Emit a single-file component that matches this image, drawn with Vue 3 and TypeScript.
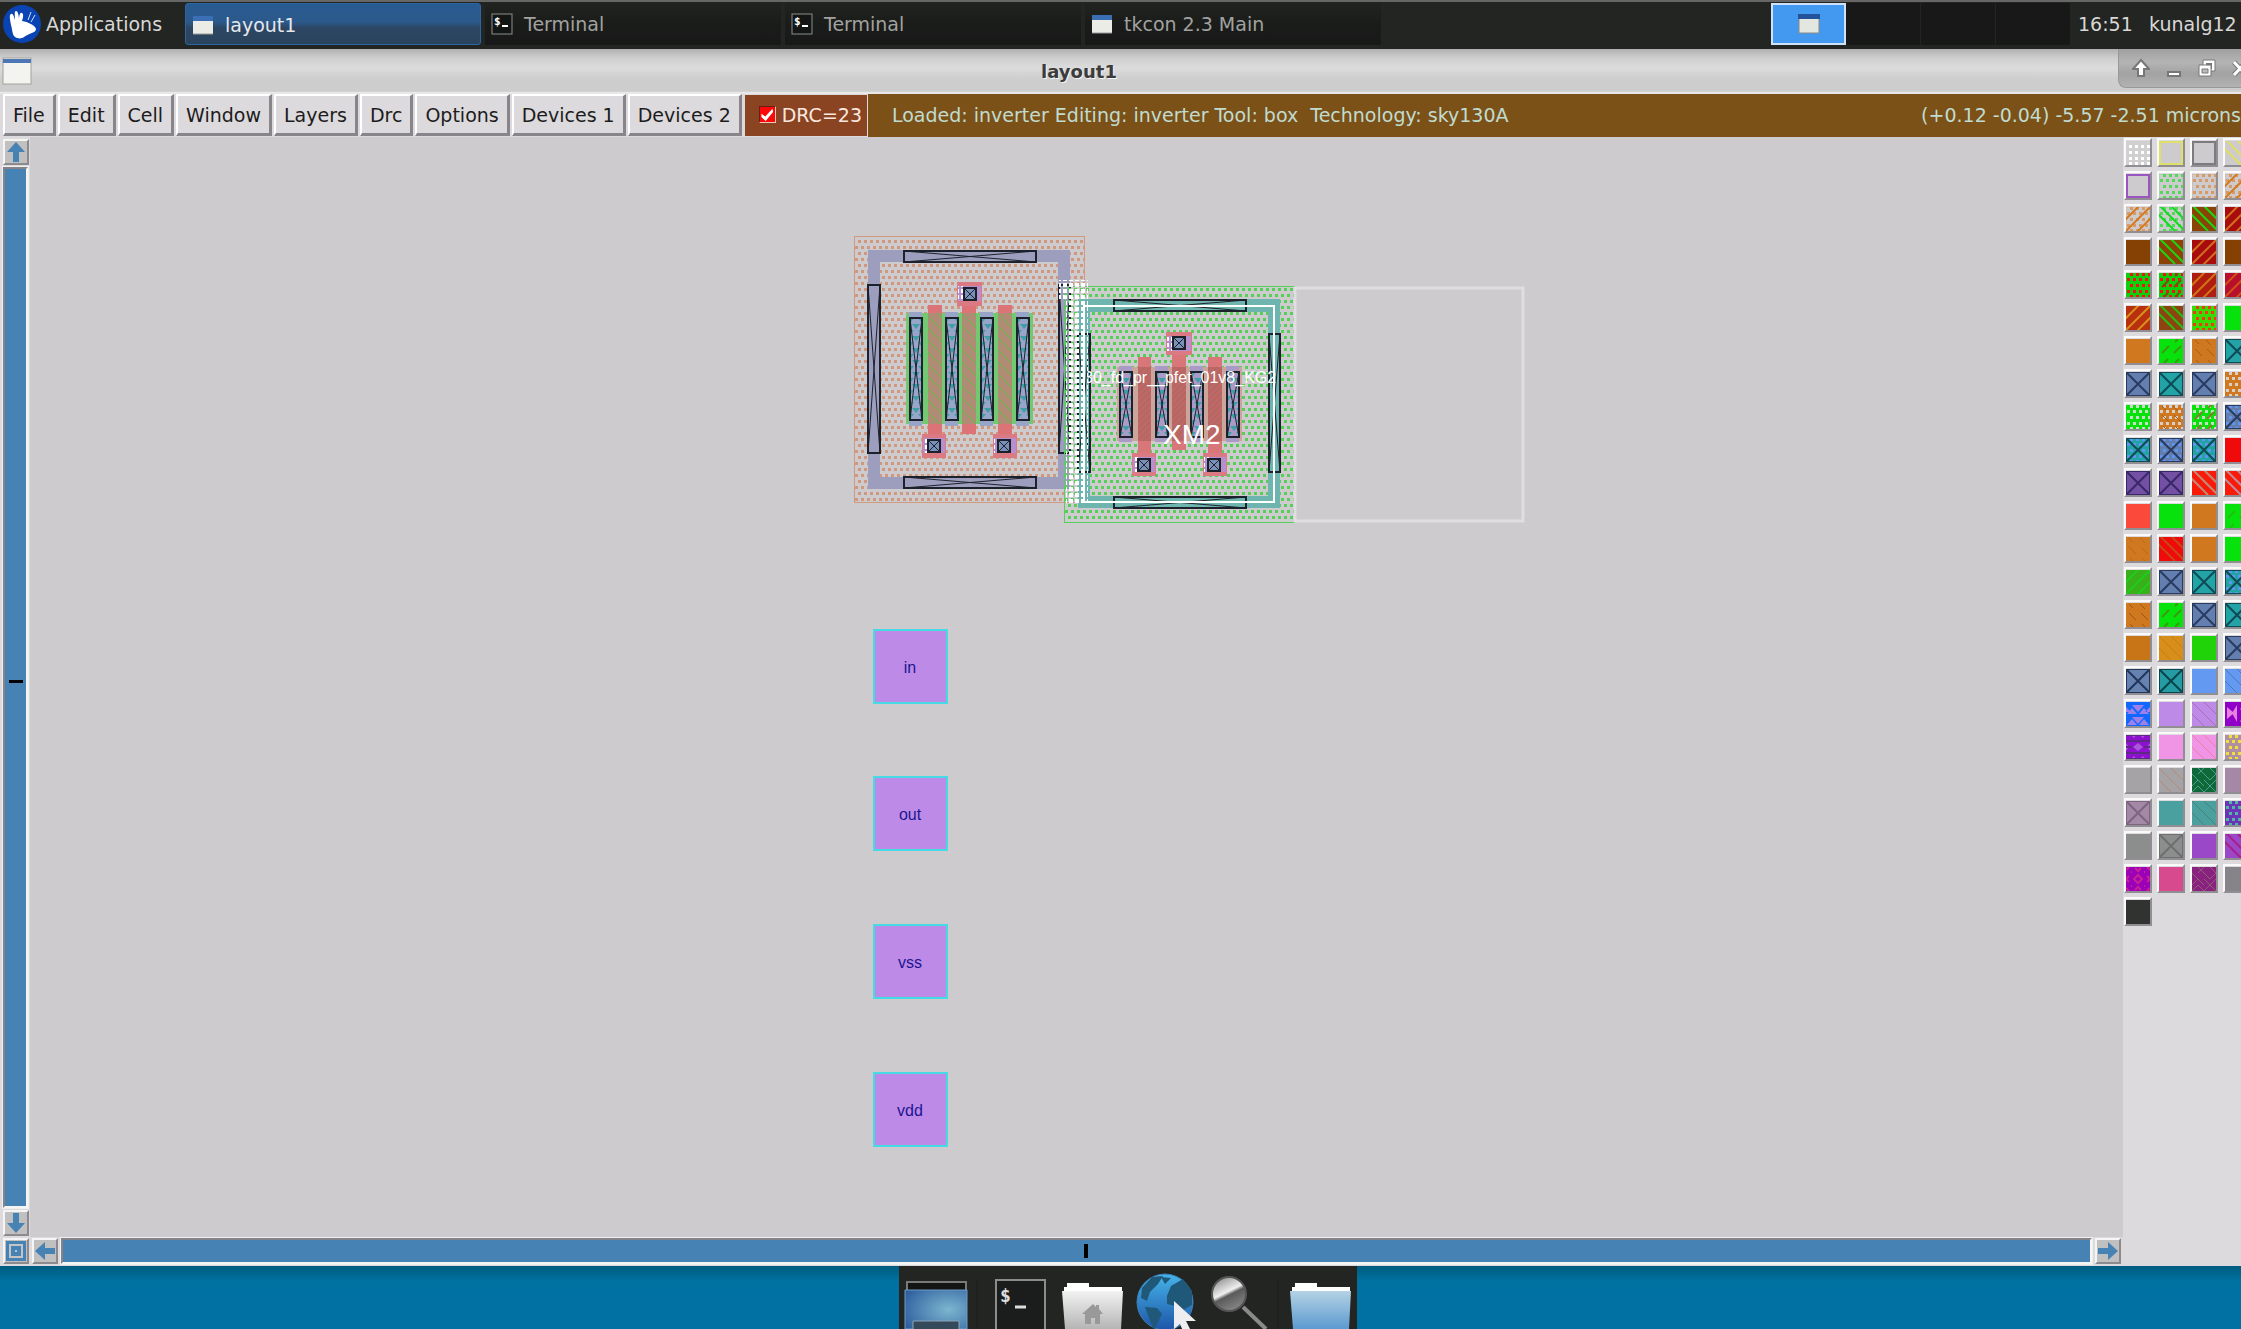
<script setup lang="ts">
type Layer = [kind: string, color: string]
interface Swatch { bg: string; layers: Layer[] }

const tasks = [
  { icon: 'window', title: 'layout1', active: true },
  { icon: 'term', title: 'Terminal', active: false },
  { icon: 'term', title: 'Terminal', active: false },
  { icon: 'window', title: 'tkcon 2.3 Main', active: false },
]
const menus = ['File', 'Edit', 'Cell', 'Window', 'Layers', 'Drc', 'Options', 'Devices 1', 'Devices 2']

const s = (bg: string, ...layers: Layer[]): Swatch => ({ bg, layers })
const INK = '#2a3b60'
const DEEP = '#0f4a56'
const GRAY = '#cdcbce'
const GREEN = '#08e20c'
const ORANGE = '#cf7820'
const BLUE = '#637fb0'
const TEAL = '#22a3a6'
const AZURE = '#5f95f0'
const blueX = () => s(BLUE, ['x', INK])
const tealX = () => s(TEAL, ['x', DEEP])
const tealDots = () => s(TEAL, ['dots', AZURE], ['x', DEEP])

const swatches: Swatch[] = [
  s('#d0d0d0', ['grid', '#ffffff']), s(GRAY, ['frame', '#dfe067']), s(GRAY, ['frame', '#7c7c7e']), s(GRAY, ['back', '#e0dd66']),
  s(GRAY, ['frame', '#9a55c0']), s(GRAY, ['thin', '#8fd893'], ['dots', '#55d85a']), s(GRAY, ['thin', '#d8b090'], ['dots', '#d59a66']), s(GRAY, ['thin', '#d8b090'], ['dots', '#d59a66'], ['slash', '#d47a20']),
  s(GRAY, ['thin', '#d8b090'], ['dots', '#d59a66'], ['slash', '#d47a20']), s(GRAY, ['thin', '#8fd893'], ['dots', '#55d85a'], ['back', '#10dc20']), s('#8b4205', ['back', '#1ad510']), s('#a80c0c', ['slash', '#d07020']),
  s('#854004'), s('#8b4205', ['back', '#1ad510']), s('#a80c0c', ['slash', '#d07020']), s('#854004'),
  s('#0dd00d', ['dots', '#f01414']), s('#0dd00d', ['dots', '#f01414'], ['dashSlash', '#7a5010']), s('#b01c10', ['slash', '#cf7518']), s('#b80f2c', ['slash', '#cf5018']),
  s('#b8300f', ['slash', '#d8901a']), s('#8e4410', ['back', '#22c010']), s('#35dd05', ['dots', '#f03a10']), s(GREEN),
  s(ORANGE), s(GREEN, ['dashSlash', '#3c9a10']), s(ORANGE, ['dashBack', '#a06018']), tealX(),
  blueX(), tealX(), blueX(), s(ORANGE, ['dots', '#d8cfc8']),
  s(GREEN, ['dots', '#c8dcc8']), s(ORANGE, ['dots', '#d8cfc8'], ['dashBack', '#a06018']), s(GREEN, ['dots', '#c8dcc8'], ['dashSlash', '#8a7a30']), s(BLUE, ['dots', AZURE], ['x', INK]),
  tealDots(), s(BLUE, ['dots', AZURE], ['x', INK]), tealDots(), s('#f00a0c'),
  s('#7350a3', ['x', '#382868']), s('#7350a3', ['x', '#382868']), s('#fa1a08', ['back', '#c08a78']), s('#fa1a08', ['back', '#c08a98']),
  s('#fb4a3c'), s(GREEN), s(ORANGE), s(GREEN, ['dashSlash', '#20c010']),
  s(ORANGE, ['dashBack', '#b8681c']), s('#f00a0c', ['back', '#c84814']), s(ORANGE), s(GREEN),
  s('#38b01c', ['slash', '#20cc18']), blueX(), tealX(), tealDots(),
  s(ORANGE, ['dashBack', '#9a5818']), s(GREEN, ['dashSlash', '#3c9a10']), blueX(), tealX(),
  s('#c87518'), s('#d88e18', ['thinBack', '#b8821c']), s('#20d208'), blueX(),
  s('#6582b0', ['x', '#22365a']), s('#259ba3', ['x', '#0a444c']), s('#6399f0'), s('#6399f0', ['thinBack', '#4a78b8']),
  s('#1068ff', ['tri', '#a080e8']), s('#bd8be7'), s('#bd8be7', ['thinBack', '#b06cae']), s('#9000c8', ['triSide', '#e880e0']),
  s('#9010d0', ['diamond', '#a858d8'], ['weave', '#5c2c84']), s('#f095e5'), s('#f095e5', ['thinBack', '#f47ca4']), s('#b090a0', ['dots', '#f0e038']),
  s('#a5a3a6'), s('#a5a3a6', ['thinBack', '#b58a70']), s('#0f6838', ['basket', '#45a090']), s('#a588a5'),
  s('#a588a5', ['x', '#7d6580']), s('#4a9f9f'), s('#4a9f9f', ['thinBack', '#508070']), s('#6a35b8', ['dots', '#50b8a0']),
  s('#8b8e8c'), s('#8b8e8c', ['x', '#6c706e']), s('#9b48c8'), s('#9b48c8', ['back', '#a8208c']),
  s('#9a00b8', ['rings', '#cc2094']), s('#d84a8e'), s('#8a2080', ['basket', '#8a6070']), s('#868488'),
  s('#30332f'),
]

function squares(rows: number[], even: number[], odd: number[]): string {
  return rows.map((y, i) => (i % 2 ? odd : even).map(x => `M${x} ${y}h3v3h-3z`).join('')).join('')
}

const fills: Record<string, string> = {
  grid: squares([4, 10, 16, 21], [3, 9, 15, 21], [3, 9, 15, 21]),
  dots: squares([0, 5, 11, 17, 22], [4, 10, 16, 22], [1, 7, 13, 19]),
  tri: 'M6 3h12l-6 7zM0 10h5l-5-5zM24 5v5h-5zM1 12h10l-5-6zM13 12h10l-5-6zM6 15h12l-6 7zM1 23h10l-5-6zM13 23h10l-5-6z',
  triSide: 'M2 5l7 6-7 6zM12 3v17l-5-9zM22 2v10l-7-5zM22 14v10l-7-5z',
  diamond: 'M12 8l5 4-5 4-5-4zM0 8l3 4-3 4zM24 8l-3 4 3 4zM5 0h5l-2 3zM14 0h5l-2 3zM5 24h5l-2-3zM14 24h5l-2-3z',
}
const strokes: Record<string, string> = {
  frame: 'M1 1H23V23H1z',
  thin: 'M0 0H24V24H0z',
  back: 'M-8 0l24 24M0-2l26 26M12-1l14 14',
  thinBack: 'M-8 4l22 22M-1-1l26 26M12 0l14 14',
  slash: 'M-2 14L14-2M-1 25L25-1M10 26L26 10',
  dashSlash: 'M3 14l7-7M16 3l3-3M5 24l4-4M15 14l7-7M16 24l4-4',
  dashBack: 'M3 1l4 4M3 10l7 7M15 10l7 7M14 1l5 5M4 21l3 3M16 21l3 3',
  x: 'M0 0L24 24M24 0L0 24M0 0H24V24H0z',
  weave: 'M0 6H24M0 12H6M18 12H24M0 18H24M0 0H24M0 24H24',
  basket: 'M0 6l6 6M6 0l6 6M12 0l-6 6M12 6l6 6M18 0l6 6M24 6l-6 6M0 18l6-6M6 12l6 6M0 24l6-6M12 12l6 6M12 24l6-6M18 18l6 6M24 12l-6 6M6 18l6 6',
  rings: 'M8 12l4-4 4 4-4 4zM0 3l3-3M21 0l3 3M0 21l3 3M24 21l-3 3M0 12l3-3M0 12l3 3M24 12l-3-3M24 12l-3 3M9 1l3 3 3-3M9 23l3-3 3 3M5 5h1M18 5h1M5 19h1M18 19h1',
}
const wide = new Set(['frame', 'back', 'slash', 'x', 'rings', 'weave', 'dashSlash'])

const labels = [
  { name: 'in', y: 629 },
  { name: 'out', y: 776 },
  { name: 'vss', y: 924 },
  { name: 'vdd', y: 1072 },
]

interface Box { x: number; y: number; w: number; h: number }
const b = (x: number, y: number, w: number, h: number): Box => ({ x, y, w, h })
const outline = (k: Box) => `M${k.x} ${k.y}h${k.w}v${k.h}h${-k.w}z`
const diagonals = (k: Box) => `M${k.x} ${k.y}l${k.w} ${k.h}M${k.x + k.w} ${k.y}l${-k.w} ${k.h}`

const left = {
  guards: [b(904, 251, 132, 11), b(904, 477, 132, 11), b(868, 285, 12, 168), b(1059, 285, 11, 168)],
  metal: [909, 945, 980, 1016].map(x => b(x, 312, 13, 114)),
  contact: [910, 946, 981, 1017].map(x => b(x, 318, 12, 102)),
  gates: [b(928, 305, 14, 129), b(962, 305, 14, 129), b(998, 305, 14, 129)],
  channel: [b(928, 313, 14, 111), b(962, 313, 14, 111), b(998, 313, 14, 111)],
  pads: [b(957, 282, 25, 24), b(922, 434, 24, 24), b(993, 434, 24, 24)],
  vias: [b(964, 288, 12, 12), b(928, 440, 12, 12), b(998, 440, 12, 12)],
}
const right = {
  guards: [b(1114, 300, 132, 11), b(1114, 497, 132, 11), b(1078, 334, 12, 138), b(1269, 334, 11, 138)],
  metal: [1119, 1155, 1190, 1226].map(x => b(x, 366, 13, 76)),
  contact: [1120, 1156, 1191, 1227].map(x => b(x, 372, 12, 65)),
  gates: [b(1138, 357, 13, 97), b(1172, 354, 14, 96), b(1208, 357, 14, 97)],
  channel: [b(1138, 367, 13, 74), b(1172, 367, 14, 74), b(1208, 367, 14, 74)],
  pads: [b(1166, 332, 26, 23), b(1132, 453, 24, 23), b(1203, 453, 24, 23)],
  vias: [b(1173, 337, 12, 12), b(1138, 459, 12, 12), b(1208, 459, 12, 12)],
}
</script>

<template>
  <div class="desktop">
    <nav class="taskbar">
      <button class="apps">
        <svg width="40" height="40" viewBox="0 0 40 40" aria-hidden="true">
          <circle cx="20" cy="20" r="19" fill="#0a44b4" />
          <path d="M9 21c-1-6-2-10 0-11s3 3 4 6c0-4-1-9 1-9s3 5 3 9c0-4 1-8 3-7s1 5 0 8c6 1 13 4 14 8 0 4-7 4-12 8-4 3-10 1-11-3-1-3-1-6-2-9z" fill="#fff" />
          <path d="M26 16l3-8M29 18l4-7" stroke="#cfe0ff" stroke-width="1" />
        </svg>
        <span>Applications</span>
      </button>
      <button v-for="(t, i) in tasks" :key="i" class="task" :class="{ active: t.active }">
        <svg v-if="t.icon === 'window'" width="22" height="22" viewBox="0 0 22 22" aria-hidden="true">
          <rect x="1" y="2" width="20" height="18" fill="#ecece6" />
          <rect x="1" y="2" width="20" height="5" fill="#3a6eb5" />
          <path d="M1 20h20" stroke="#999" />
        </svg>
        <svg v-else width="22" height="22" viewBox="0 0 22 22" aria-hidden="true">
          <rect x="1" y="1" width="20" height="20" fill="#131615" stroke="#8b8e8d" />
          <text x="3" y="12" class="prompt">$</text>
          <path d="M11 13h6" stroke="#fff" stroke-width="2" />
        </svg>
        <span>{{ t.title }}</span>
      </button>
      <div class="pager">
        <button class="desk current" aria-label="Workspace 1">
          <svg width="22" height="20" viewBox="0 0 22 20" aria-hidden="true">
            <rect x="1" y="1" width="20" height="18" fill="#e4e6e0" stroke="#8a8a86" />
            <rect x="0" y="0" width="22" height="5" fill="#22529a" />
          </svg>
        </button>
        <button v-for="n in 3" :key="n" class="desk" :aria-label="'Workspace ' + (n + 1)"></button>
      </div>
      <span class="clock">16:51</span>
      <span class="user">kunalg12</span>
    </nav>

    <main class="window">
      <header class="titlebar">
        <svg class="winicon" width="30" height="28" viewBox="0 0 30 28" aria-hidden="true">
          <rect x="1" y="1" width="28" height="26" fill="#f3f3f0" stroke="#a4a29c" />
          <rect x="1" y="2" width="28" height="4" fill="#4d76b6" />
        </svg>
        <h1>layout1</h1>
        <div class="controls">
          <button aria-label="Shade"><svg width="18" height="22" viewBox="0 0 18 22"><path d="M9 3l8 9h-5v7H6v-7H1z" fill="#fff" stroke="#777" stroke-width="2" /></svg></button>
          <button aria-label="Minimize"><svg width="18" height="22" viewBox="0 0 18 22"><path d="M3 15h12v4H3z" fill="#fff" stroke="#777" stroke-width="2" /></svg></button>
          <button aria-label="Restore"><svg width="18" height="22" viewBox="0 0 18 22"><path d="M5 3h12v11H5z" fill="#fff" stroke="#777" /><path d="M8 6h6v6H8z" fill="#777" /><path d="M1 8h12v11H1z" fill="#fff" stroke="#777" /><path d="M4 12h6v4H4z" fill="#bbb" stroke="#777" /></svg></button>
          <button aria-label="Close"><svg width="18" height="22" viewBox="0 0 18 22"><path d="M3 5l12 13M15 5L3 18" stroke="#777" stroke-width="5" /><path d="M3 5l12 13M15 5L3 18" stroke="#fff" stroke-width="3" /></svg></button>
        </div>
      </header>

      <div class="menubar">
        <button v-for="m in menus" :key="m" class="menu">{{ m }}</button>
        <label class="drc"><input type="checkbox" checked /><span>DRC=23</span></label>
        <div class="status">
          <span class="info">Loaded: inverter Editing: inverter Tool: box&nbsp; Technology: sky130A</span>
          <span class="coords">(+0.12 -0.04) -5.57 -2.51 microns</span>
        </div>
      </div>

      <div class="body">
        <div class="vscroll">
          <button class="arrow" aria-label="Scroll up"><svg width="20" height="20" viewBox="0 0 20 20"><path d="M10 0l9 10h-6v10H7V10H1z" fill="#4682b4" /></svg></button>
          <div class="track"><i></i></div>
          <button class="arrow" aria-label="Scroll down"><svg width="20" height="20" viewBox="0 0 20 20"><path d="M10 20l9-10h-6V0H7v10H1z" fill="#4682b4" /></svg></button>
        </div>

        <svg class="canvas" aria-label="Cell layout">
          <defs>
            <pattern id="pOrange" width="6" height="12" patternUnits="userSpaceOnUse"><path d="M0 0h3v3H0zM3 6h3v3H3z" fill="#d0987e" /></pattern>
            <pattern id="pGreen" width="6" height="12" patternUnits="userSpaceOnUse"><path d="M0 0h3v3H0zM3 6h3v3H3z" fill="#55cf57" /></pattern>
            <pattern id="pWhite" width="6" height="6" patternUnits="userSpaceOnUse"><path d="M1 1h4v4H1z" fill="#fff" /></pattern>
            <pattern id="pSlant" width="12" height="12" patternUnits="userSpaceOnUse"><path d="M-2-2l16 16M-2 10l4 4M10-2l4 4" stroke="#58c43c" stroke-width="1" /></pattern>
            <pattern id="pTri" width="12" height="12" patternUnits="userSpaceOnUse"><path d="M0 0h8l-4 5zM6 6h8l-4 5zM-6 6h8l-4 5z" fill="#3f9fa6" /></pattern>
            <pattern id="pSpeck" width="6" height="6" patternUnits="userSpaceOnUse"><path d="M0 6L6 0" stroke="#a0704e" /></pattern>
            <clipPath id="clipName"><rect x="1088" y="360" width="188" height="40" /></clipPath>
          </defs>
          <g transform="translate(-30 -137)">
            <rect x="854" y="236" width="230" height="266" fill="url(#pOrange)" class="rim" stroke="#d09a80" />
            <path d="M868 250h202v239H868zM880 262v215h178V262z" fill="#9d9dbd" fill-rule="evenodd" />
            <g v-for="(k, i) in left.guards" :key="'g' + i">
              <path :d="outline(k)" class="outline" />
              <path :d="diagonals(k)" class="diagonal" />
            </g>
            <rect x="906" y="313" width="127" height="111" fill="#72c971" />
            <rect v-for="(k, i) in left.metal" :key="'m' + i" :x="k.x" :y="k.y" :width="k.w" :height="k.h" fill="#98a4c8" />
            <g v-for="(k, i) in left.contact" :key="'c' + i">
              <rect :x="k.x" :y="k.y" :width="k.w" :height="k.h" fill="url(#pTri)" />
              <path :d="outline(k)" class="outline" />
              <path :d="diagonals(k)" class="diagonal" />
            </g>
            <rect v-for="(k, i) in left.gates" :key="'p' + i" :x="k.x" :y="k.y" :width="k.w" :height="k.h" fill="#dc7477" />
            <rect v-for="(k, i) in left.channel" :key="'n' + i" :x="k.x" :y="k.y" :width="k.w" :height="k.h" fill="#b08c76" />
            <rect v-for="(k, i) in left.channel" :key="'s' + i" :x="k.x" :y="k.y" :width="k.w" :height="k.h" fill="url(#pSlant)" />
            <template v-for="(k, i) in left.pads" :key="'d' + i">
              <rect :x="k.x" :y="k.y" :width="k.w" :height="k.h" fill="#dc7a84" />
              <rect :x="k.x + 1" :y="k.y + 4" :width="k.w - 2" :height="k.h - 9" fill="#b78fce" />
              <rect :x="k.x + 1" :y="k.y + 4" width="5" :height="k.h - 9" fill="url(#pWhite)" />
            </template>
            <g v-for="(k, i) in left.vias" :key="'v' + i">
              <rect :x="k.x" :y="k.y" :width="k.w" :height="k.h" fill="#7a90b8" />
              <path :d="outline(k)" class="outline" />
              <path :d="diagonals(k)" class="diagonal" />
            </g>

            <rect x="1064" y="286" width="230" height="236" fill="url(#pGreen)" class="rim" stroke="#55d058" />
            <path d="M1078 299h202v209h-202zM1090 312v184h178V312z" fill="#6db5ae" fill-rule="evenodd" />
            <g v-for="(k, i) in right.guards" :key="'g' + i">
              <path :d="outline(k)" class="outline" />
              <path :d="diagonals(k)" class="diagonal" />
            </g>
            <rect x="1117" y="367" width="125" height="74" fill="#cda49a" />
            <rect v-for="(k, i) in right.metal" :key="'m' + i" :x="k.x" :y="k.y" :width="k.w" :height="k.h" fill="#a99ac6" />
            <g v-for="(k, i) in right.contact" :key="'c' + i">
              <rect :x="k.x" :y="k.y" :width="k.w" :height="k.h" fill="url(#pTri)" />
              <path :d="outline(k)" class="outline" />
              <path :d="diagonals(k)" class="diagonal" />
            </g>
            <rect v-for="(k, i) in right.gates" :key="'p' + i" :x="k.x" :y="k.y" :width="k.w" :height="k.h" fill="#d9767a" />
            <rect v-for="(k, i) in right.channel" :key="'n' + i" :x="k.x" :y="k.y" :width="k.w" :height="k.h" fill="#bf666a" />
            <rect v-for="(k, i) in right.channel" :key="'s' + i" :x="k.x" :y="k.y" :width="k.w" :height="k.h" fill="url(#pSpeck)" />
            <template v-for="(k, i) in right.pads" :key="'d' + i">
              <rect :x="k.x" :y="k.y" :width="k.w" :height="k.h" fill="#dc7a84" />
              <rect :x="k.x + 1" :y="k.y + 4" :width="k.w - 2" :height="k.h - 8" fill="#b78fce" />
              <rect :x="k.x + 1" :y="k.y + 4" width="5" :height="k.h - 8" fill="url(#pWhite)" />
            </template>
            <g v-for="(k, i) in right.vias" :key="'v' + i">
              <rect :x="k.x" :y="k.y" :width="k.w" :height="k.h" fill="#7a90b8" />
              <path :d="outline(k)" class="outline" />
              <path :d="diagonals(k)" class="diagonal" />
            </g>
            <path d="M1059 280h29v223h-22v-203h-7z" fill="url(#pWhite)" />
            <rect x="1084" y="306" width="190" height="196" fill="none" stroke="#fff" stroke-width="2" />
            <rect x="1295" y="288" width="228" height="233" fill="none" stroke="#dfdee0" stroke-width="3" />
            <text x="1084" y="383" class="cellname" clip-path="url(#clipName)">30_fd_pr__pfet_01v8_KG2</text>
            <text x="1163" y="444" class="inst">XM2</text>

            <g v-for="l in labels" :key="l.name">
              <rect x="874" :y="l.y + 1" width="73" height="73" fill="#bd8be7" stroke="#45dbe4" stroke-width="2" />
              <text x="910" :y="l.y + 44" class="port">{{ l.name }}</text>
            </g>
          </g>
        </svg>

        <aside class="palette">
          <button v-for="(w, i) in swatches" :key="i" class="swatch" :aria-label="'Layer ' + (i + 1)">
            <svg width="24" height="24" viewBox="0 0 24 24" :style="{ background: w.bg }">
              <template v-for="([kind, color], j) in w.layers" :key="j">
                <path v-if="fills[kind]" :d="fills[kind]" :fill="color" />
                <path v-else :d="strokes[kind]" fill="none" :stroke="color" :stroke-width="wide.has(kind) ? 2 : 1" />
              </template>
            </svg>
          </button>
        </aside>

        <div class="hscroll">
          <button class="arrow" aria-label="Zoom to fit"><svg width="20" height="20" viewBox="0 0 20 20"><path d="M0 0h20v20H0z" fill="#4682b4" /><path d="M4 4h12v12H4z" fill="none" stroke="#c4c3c6" stroke-width="2" /><path d="M9 9h2v2H9z" fill="#c4c3c6" /></svg></button>
          <button class="arrow" aria-label="Scroll left"><svg width="20" height="20" viewBox="0 0 20 20"><path d="M0 10L10 1v6h10v6H10v6z" fill="#4682b4" /></svg></button>
          <div class="track"><i></i></div>
          <button class="arrow" aria-label="Scroll right"><svg width="20" height="20" viewBox="0 0 20 20"><path d="M20 10L10 1v6H0v6h10v6z" fill="#4682b4" /></svg></button>
        </div>
      </div>
    </main>

    <footer class="dock">
      <svg width="458" height="63" viewBox="0 0 458 63" aria-label="Dock">
        <defs>
          <radialGradient id="scr" cx="0.7" cy="0.5" r="0.8"><stop offset="0" stop-color="#7cb6cf" /><stop offset="1" stop-color="#2f5f9f" /></radialGradient>
          <linearGradient id="globe" x1="0" y1="0" x2="0" y2="1"><stop offset="0" stop-color="#46b4e8" /><stop offset="1" stop-color="#1d55a8" /></linearGradient>
          <linearGradient id="home" x1="0" y1="0" x2="0" y2="1"><stop offset="0" stop-color="#f2f2f2" /><stop offset="1" stop-color="#b5b5b5" /></linearGradient>
          <linearGradient id="folder" x1="0" y1="0" x2="0" y2="1"><stop offset="0" stop-color="#b4d2e4" /><stop offset="1" stop-color="#5c9ad0" /></linearGradient>
          <linearGradient id="lens" x1="0.2" y1="0" x2="0.7" y2="1"><stop offset="0" stop-color="#8a8a8a" /><stop offset="0.45" stop-color="#f0f0f0" /><stop offset="0.55" stop-color="#5a5a5a" /><stop offset="1" stop-color="#8a8a8a" /></linearGradient>
        </defs>
        <path d="M8 24v-8h59v8" fill="#131414" stroke="#777a78" stroke-width="2" />
        <path d="M6 24h62v39H6z" fill="url(#scr)" stroke="#6c9cc8" />
        <path d="M14 63v-8h46v8" fill="#34495a" stroke="#8aa6b8" stroke-width="1" />
        <path d="M78 14v49M379 14v49" stroke="#1c1e1b" />
        <path d="M97 64V14h49v50" fill="#1b1d1c" stroke="#8b8d8c" stroke-width="2" />
        <text x="101" y="36" class="bigprompt">$</text>
        <path d="M116 41h11" stroke="#ddd" stroke-width="3" />
        <path d="M165 30v-9h3v-4h22v4h33v9z" fill="#fff" />
        <path d="M163 25h61l-2 38h-56z" fill="url(#home)" />
        <path d="M183 48l11-10 3 3v-2h3v4l4 5h-3v10h-5v-6h-4v6h-6v-10z" fill="#999" />
        <circle cx="266" cy="36" r="28" fill="url(#globe)" stroke="#3b7fb8" />
        <path d="M243 22l10-11 11-1-5 8-8 8-3 9-6-3zM262 11l10 1-6 6zM246 41l12 1 5 6-4 8-4 8-5-12zM268 30l4-10 12-7 9 12v14l-9 5-8-4-8-2z" fill="#1f5878" />
        <path d="M275 35l22 20h-10l6 12-7 3-5-12-6 5z" fill="#eeeef0" />
        <path d="M344 41l23 22" stroke="#8a8a8a" stroke-width="4" />
        <circle cx="330" cy="28" r="17" fill="url(#lens)" stroke="#555" stroke-width="2" />
        <path d="M393 30v-9h3v-4h22v4h33v9z" fill="#fff" />
        <path d="M391 25h61l-2 38h-56z" fill="url(#folder)" />
      </svg>
    </footer>
  </div>
</template>

<style>
body {
  margin: 0;
}
</style>

<style scoped>
.desktop {
  display: flex;
  flex-direction: column;
  height: 100vh;
  overflow: hidden;
  background: #0072a2;
  font: 19px/24px "DejaVu Sans", sans-serif;
}
button {
  margin: 0;
  padding: 0;
  border: 0;
  background: none;
  color: inherit;
  font: inherit;
}
svg {
  display: block;
  flex: none;
}
.taskbar {
  display: flex;
  align-items: center;
  gap: 4px;
  box-sizing: border-box;
  height: 49px;
  flex: none;
  padding: 0 0 4px 2px;
  border-top: 2px solid #666;
  background: #232522;
  color: #d8d8d6;
  white-space: nowrap;
}
.apps {
  display: flex;
  align-items: center;
  gap: 4px;
  width: 179px;
}
.task {
  display: flex;
  align-items: center;
  gap: 11px;
  flex: 0 1 296px;
  height: 42px;
  box-sizing: border-box;
  padding-left: 6px;
  background: linear-gradient(#212321, #1a1c1a 50%, #181818);
  color: #a2a2a0;
}
.task.active {
  padding-top: 2px;
  border: 1px solid #2c67a5;
  border-radius: 3px;
  background: linear-gradient(#285b92, #2c598b 45%, #2c4663 60%, #2a435d);
  color: #e4e8ee;
}
.prompt {
  font: bold 11px "DejaVu Sans Mono", monospace;
  fill: #fff;
}
.bigprompt {
  font: bold 18px "DejaVu Sans Mono", monospace;
  fill: #ddd;
}
.pager {
  display: flex;
  margin-left: auto;
}
.desk {
  width: 75px;
  height: 42px;
  border-right: 1px solid #232522;
  background: #181818;
}
.desk.current {
  display: flex;
  align-items: center;
  justify-content: center;
  border: 2px solid #cfe2f8;
  box-sizing: border-box;
  background: #4398f0;
}
.clock {
  width: 67px;
  margin-left: 3px;
}
.user {
  width: 92px;
}
.window {
  display: flex;
  flex: 1;
  flex-direction: column;
  min-height: 0;
  background: #dcdadd;
}
.titlebar {
  display: flex;
  height: 45px;
  flex: none;
  box-sizing: border-box;
  background: linear-gradient(#b0b0b0, #cfcfcf 20%, #dcdcdc 42%, #cecece 65%, #cdcdcd 94%, #e8e8e8 96%);
}
.winicon {
  margin: 8px 8px 0 2px;
}
h1 {
  flex: 1;
  margin: 0;
  padding-top: 11px;
  color: #3c3c3c;
  font: bold 18px/24px "DejaVu Sans", sans-serif;
  text-align: center;
  text-shadow: 1px 1px #f4f4f4;
}
.controls {
  display: flex;
  align-items: center;
  gap: 15px;
  width: 123px;
  height: 39px;
  box-sizing: border-box;
  padding-left: 13px;
  overflow: hidden;
  border-bottom: 1px solid #999;
  border-left: 1px solid #999;
  border-bottom-left-radius: 8px;
  background: linear-gradient(#a0a0a0, #b4b4b4 35%, #a2a2a2 65%, #b2b2b2);
}
.menubar {
  display: flex;
  height: 43px;
  flex: none;
  padding-left: 3px;
  color: #1c1c1c;
  white-space: pre;
}
.menu {
  box-sizing: border-box;
  height: 42px;
  margin-right: 2px;
  padding: 0 8px;
  border: 2px solid;
  border-color: #fff #87858a #87858a #fff;
  border-width: 2px 3px 3px 2px;
  background: #dcdadd;
}
.drc {
  display: flex;
  align-items: center;
  gap: 6px;
  box-sizing: border-box;
  height: 41px;
  margin: 1px 1px 0 1px;
  padding: 0 5px 2px 14px;
  background: #8b4422;
  color: #fae8e0;
}
.drc input {
  appearance: none;
  width: 17px;
  height: 17px;
  margin: 0;
  border: 1px solid;
  border-color: #6c1c10 #e8c8b8 #e8c8b8 #6c1c10;
  box-sizing: border-box;
  background: #fc0808;
}
.drc input::after {
  display: block;
  width: 13px;
  height: 13px;
  margin: 1px;
  background: #fff;
  clip-path: polygon(5% 45%, 35% 65%, 90% 5%, 95% 30%, 38% 100%, 5% 70%);
  content: "";
}
.status {
  display: flex;
  flex: 1;
  align-items: center;
  justify-content: space-between;
  padding: 0 0 2px 24px;
  background: #7b5117;
  color: #c0dcd0;
}
.body {
  display: grid;
  flex: 1;
  grid-template-columns: 30px minmax(0, 1fr) 118px;
  grid-template-rows: minmax(0, 1fr) 29px;
  min-height: 0;
}
.vscroll {
  display: flex;
  flex-direction: column;
  gap: 2px;
  box-sizing: border-box;
  padding: 2px 1px 1px 3px;
}
.arrow {
  box-sizing: border-box;
  width: 26px;
  height: 26px;
  flex: none;
  padding: 1px;
  border: 2px solid;
  border-color: #f6f5f6 #8c8a8e #8c8a8e #f6f5f6;
  background: #c0c0c0;
}
.track {
  display: flex;
  flex: 1;
  align-items: center;
  justify-content: center;
  border: 2px solid;
  border-color: #858388 #f6f5f6 #f6f5f6 #858388;
  outline: 1px solid #f0eff0;
  background: #4682b4;
}
.track i {
  background: #000;
}
.vscroll .track {
  margin-right: 1px;
  padding-bottom: 12px;
}
.vscroll .track i {
  width: 14px;
  height: 3px;
}
.hscroll .track {
  padding-left: 18px;
}
.hscroll .track i {
  width: 4px;
  height: 14px;
}
.canvas {
  width: 100%;
  height: 100%;
  background: #cdcbce;
}
.palette {
  display: grid;
  grid-row: 1 / 3;
  grid-column: 3;
  grid-template-columns: repeat(4, 28px);
  grid-auto-rows: 29px;
  gap: 4px 5px;
  overflow: hidden;
  padding: 1px 0 0 1px;
}
.swatch {
  border: 2px solid;
  border-color: #fbfafb #908e92 #908e92 #fbfafb;
  background: #dcdadd;
}
.hscroll {
  display: flex;
  grid-column: 1 / 3;
  grid-row: 2;
  gap: 3px;
  box-sizing: border-box;
  padding: 1px 2px 2px 3px;
}
.outline,
.diagonal {
  fill: none;
  stroke: #1c222c;
}
.outline,
.rim {
  shape-rendering: crispEdges;
}
.outline {
  stroke-width: 2;
}
.cellname,
.inst {
  fill: #fff;
  font: 16px "Liberation Sans", sans-serif;
}
.inst {
  font-size: 28px;
}
.port {
  fill: #1c1590;
  font: 16px "Liberation Sans", sans-serif;
  text-anchor: middle;
}
.dock {
  display: flex;
  justify-content: center;
  height: 63px;
  flex: none;
  padding-left: 15px;
  background: linear-gradient(#005c80, #0072a2 16px, #0070a2);
}
.dock svg {
  background: #232522;
}
</style>
